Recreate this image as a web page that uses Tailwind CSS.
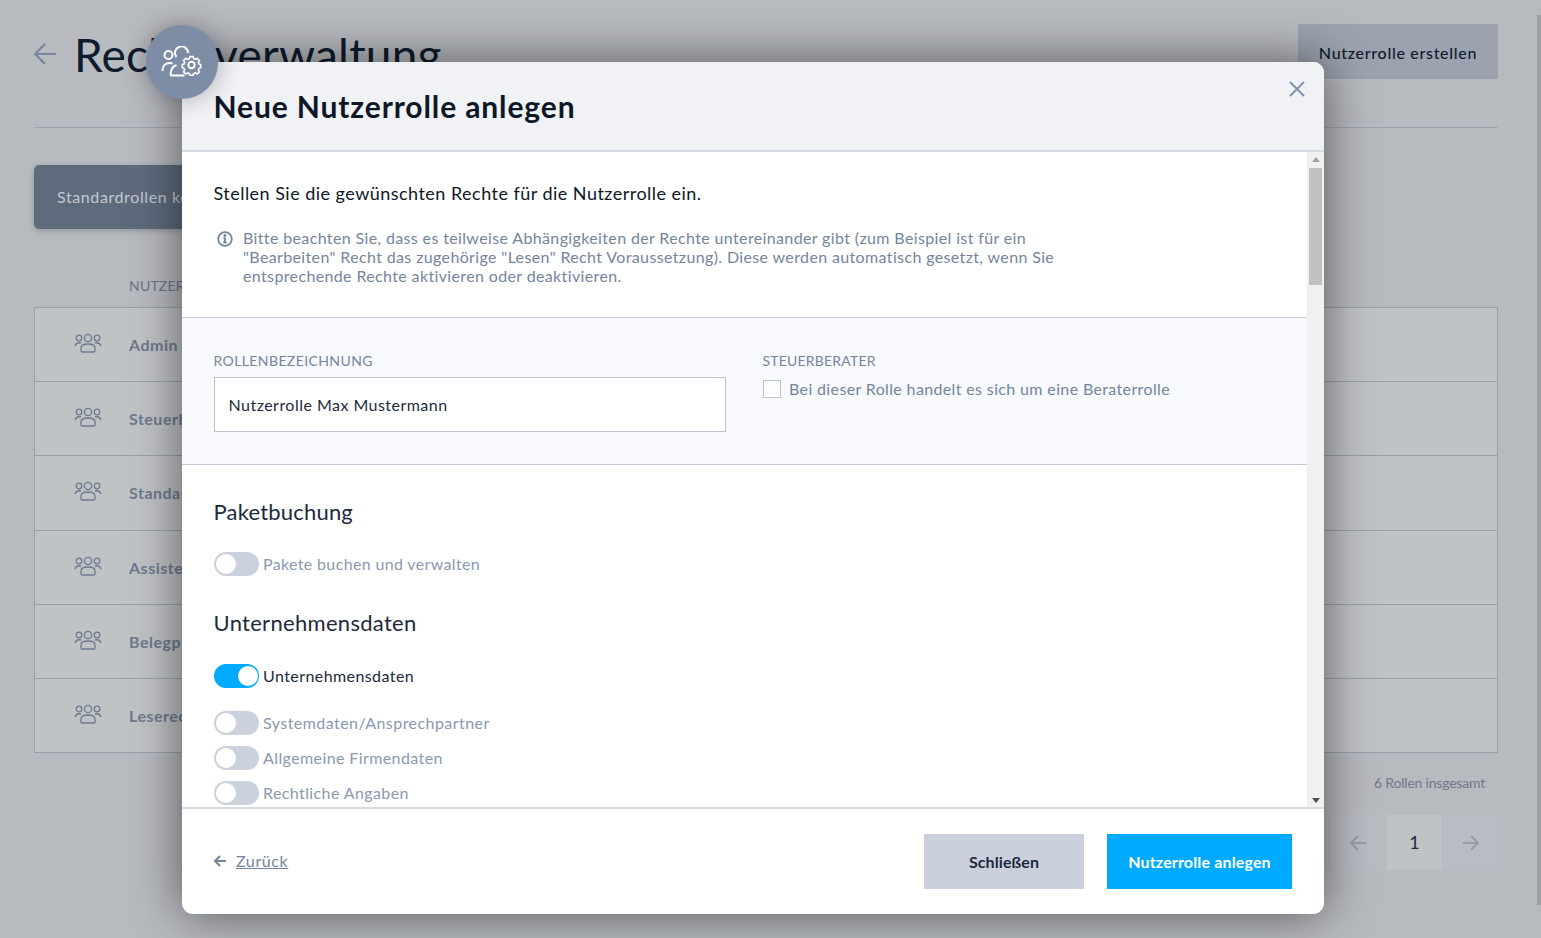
<!doctype html>
<html lang="de"><head><meta charset="utf-8"><script src="https://cdn.jsdelivr.net/npm/@tailwindcss/browser@4"></script></head>
<body class="bg-[#b7babf]">
<div class="relative h-[938px] w-[1541px] overflow-hidden bg-[#b7babf] font-['Lato','Liberation_Sans',sans-serif] text-[#0e1726]">
  <!-- Page behind the overlay -->
  <div class="pl-[34px] pr-[43px] pt-[24px]">
    <header class="flex h-[104px] items-start justify-between border-b border-[#9fa5b0]">
      <div class="flex h-[55px] items-center">
        <svg class="ml-[-1px] mr-[18px] mt-[4px]" width="24" height="24" viewBox="0 0 24 24" fill="none" stroke="#75859c" stroke-width="2"><path d="M23 12H2M12 2 2 12l10 10"/></svg>
        <h1 class="ml-[-1px] mt-[7px] text-[46px] leading-[58px] tracking-[0.2px] font-normal text-[#0e1b2e]">Rechteverwaltung</h1>
      </div>
      <button class="h-[55px] w-[200px] pt-[2px] bg-[#9ca3ae] text-[16px] font-medium tracking-[0.7px] text-[#0e1b2e]">Nutzerrolle erstellen</button>
    </header>
    <button class="mt-[37px] block h-[64px] w-[300px] rounded-[5px] bg-[#5e6b7d] pl-[23px] text-left text-[16px] tracking-[0.6px] text-[#c4c8ce] shadow-[0_2px_6px_rgba(0,0,0,0.2)]">Standardrollen konfigurieren</button>
    <div class="mt-[48px] h-[30px] pl-[95px] text-[14px] leading-[18px] tracking-[0.2px] text-[#6b7587]">NUTZERROLLE</div>
    <div class="border border-[#9aa1ac] bg-[#c0c3c6]">
      <div class="flex h-[74px] items-center border-b border-[#9aa1ac] pl-[39px]"><svg class="mr-[27px] mt-[-4px]" width="28" height="20" viewBox="0 0 28 20" fill="none" stroke="#6d7a8d" stroke-width="1.3"><circle cx="14" cy="5" r="3.6"/><circle cx="5" cy="5" r="2.8"/><circle cx="23" cy="5" r="2.8"/><path d="M1 13c1-3 4-3.500 6-3M27 13c-1-3-4-3.500-6-3M7 18v-3c0-3 3-4 7-4s7 1 7 4v3c0 1-1 1-1 1H8s-1 0-1-1z"/></svg><span class="text-[16px] font-bold tracking-[0.5px] text-[#6d7a8d]">Admin</span></div>
      <div class="flex h-[74px] items-center border-b border-[#9aa1ac] pl-[39px]"><svg class="mr-[27px] mt-[-4px]" width="28" height="20" viewBox="0 0 28 20" fill="none" stroke="#6d7a8d" stroke-width="1.3"><circle cx="14" cy="5" r="3.6"/><circle cx="5" cy="5" r="2.8"/><circle cx="23" cy="5" r="2.8"/><path d="M1 13c1-3 4-3.500 6-3M27 13c-1-3-4-3.500-6-3M7 18v-3c0-3 3-4 7-4s7 1 7 4v3c0 1-1 1-1 1H8s-1 0-1-1z"/></svg><span class="text-[16px] font-bold tracking-[0.5px] text-[#6d7a8d]">Steuerberater</span></div>
      <div class="flex h-[75px] items-center border-b border-[#9aa1ac] pl-[39px]"><svg class="mr-[27px] mt-[-4px]" width="28" height="20" viewBox="0 0 28 20" fill="none" stroke="#6d7a8d" stroke-width="1.3"><circle cx="14" cy="5" r="3.6"/><circle cx="5" cy="5" r="2.8"/><circle cx="23" cy="5" r="2.8"/><path d="M1 13c1-3 4-3.500 6-3M27 13c-1-3-4-3.500-6-3M7 18v-3c0-3 3-4 7-4s7 1 7 4v3c0 1-1 1-1 1H8s-1 0-1-1z"/></svg><span class="text-[16px] font-bold tracking-[0.5px] text-[#6d7a8d]">Standard</span></div>
      <div class="flex h-[74px] items-center border-b border-[#9aa1ac] pl-[39px]"><svg class="mr-[27px] mt-[-4px]" width="28" height="20" viewBox="0 0 28 20" fill="none" stroke="#6d7a8d" stroke-width="1.3"><circle cx="14" cy="5" r="3.6"/><circle cx="5" cy="5" r="2.8"/><circle cx="23" cy="5" r="2.8"/><path d="M1 13c1-3 4-3.500 6-3M27 13c-1-3-4-3.500-6-3M7 18v-3c0-3 3-4 7-4s7 1 7 4v3c0 1-1 1-1 1H8s-1 0-1-1z"/></svg><span class="text-[16px] font-bold tracking-[0.5px] text-[#6d7a8d]">Assistenz</span></div>
      <div class="flex h-[74px] items-center border-b border-[#9aa1ac] pl-[39px]"><svg class="mr-[27px] mt-[-4px]" width="28" height="20" viewBox="0 0 28 20" fill="none" stroke="#6d7a8d" stroke-width="1.3"><circle cx="14" cy="5" r="3.6"/><circle cx="5" cy="5" r="2.8"/><circle cx="23" cy="5" r="2.8"/><path d="M1 13c1-3 4-3.500 6-3M27 13c-1-3-4-3.500-6-3M7 18v-3c0-3 3-4 7-4s7 1 7 4v3c0 1-1 1-1 1H8s-1 0-1-1z"/></svg><span class="text-[16px] font-bold tracking-[0.5px] text-[#6d7a8d]">Belegprüfer</span></div>
      <div class="flex h-[73px] items-center pl-[39px]"><svg class="mr-[27px] mt-[-4px]" width="28" height="20" viewBox="0 0 28 20" fill="none" stroke="#6d7a8d" stroke-width="1.3"><circle cx="14" cy="5" r="3.6"/><circle cx="5" cy="5" r="2.8"/><circle cx="23" cy="5" r="2.8"/><path d="M1 13c1-3 4-3.500 6-3M27 13c-1-3-4-3.500-6-3M7 18v-3c0-3 3-4 7-4s7 1 7 4v3c0 1-1 1-1 1H8s-1 0-1-1z"/></svg><span class="text-[16px] font-bold tracking-[0.5px] text-[#6d7a8d]">Leserecht</span></div>
    </div>
    <div class="mt-[21px] pr-[13px] text-right text-[14px] leading-[17px] tracking-[-0.2px] text-[#6f7889]">6 Rollen insgesamt</div>
    <div class="mt-[24px] flex justify-end gap-[2px]">
      <div class="flex h-[55px] w-[55px] items-center justify-center bg-[#b9bcc3]"><svg width="18" height="18" viewBox="0 0 18 18" fill="none" stroke="#979ea9" stroke-width="2"><path d="M17 9H2M9 2 2 9l7 7"/></svg></div>
      <div class="flex h-[55px] w-[55px] items-center justify-center bg-[#c0c3c6] text-[18px] text-[#1d2a3c]">1</div>
      <div class="flex h-[55px] w-[54px] items-center justify-center bg-[#b9bcc3]"><svg width="18" height="18" viewBox="0 0 18 18" fill="none" stroke="#979ea9" stroke-width="2"><path d="M1 9h15M9 2l7 7-7 7"/></svg></div>
    </div>
  </div>
  <div class="absolute right-0 top-[15px] h-[890px] w-[4px] bg-[#9b9ea3]"></div>

  <!-- Modal -->
  <section class="absolute left-[182px] top-[62px] flex h-[852px] w-[1142px] flex-col rounded-[11px] bg-white shadow-[0_0_50px_rgba(0,0,0,0.55)]">
    <header class="relative h-[90px] shrink-0 rounded-t-[11px] border-b-2 border-[#d5dae4] bg-[#f0f2f6] pl-[31.500px] pt-[25px]">
      <h2 class="text-[30px] leading-[38px] font-bold tracking-[0.88px] text-[#0e1726]">Neue Nutzerrolle anlegen</h2>
      <svg class="absolute right-[18px] top-[18px]" width="18" height="18" viewBox="0 0 18 18" fill="none" stroke="#8494ab" stroke-width="2"><path d="M2 2l14 14M16 2 2 16"/></svg>
    </header>
    <div class="relative flex min-h-0 flex-1">
      <div class="min-w-0 flex-1 overflow-hidden">
        <div class="h-[166px] border-b border-[#c3cad6] pl-[31.500px] pt-[29px]">
          <p class="text-[18px] leading-[24px] tracking-[0.47px] text-[#0e1726]">Stellen Sie die gewünschten Rechte für die Nutzerrolle ein.</p>
          <div class="mt-[23px] flex">
            <svg class="ml-[3px] mr-[10.500px] mt-[3px] shrink-0" width="16" height="16" viewBox="0 0 16 16" fill="none" stroke="#75859c" stroke-width="1.800"><circle cx="8" cy="8" r="6.800"/><path d="M8 7v4.500M6.300 11.500h3.400M6.500 7H8" /><circle cx="8" cy="4.500" r="0.7" fill="#75859c"/></svg>
            <p class="w-[835px] text-[16px] leading-[19px] tracking-[0.365px] text-[#75859c]">Bitte beachten Sie, dass es teilweise Abhängigkeiten der Rechte untereinander gibt (zum Beispiel ist für ein "Bearbeiten" Recht das zugehörige "Lesen" Recht Voraussetzung). Diese werden automatisch gesetzt, wenn Sie entsprechende Rechte aktivieren oder deaktivieren.</p>
          </div>
        </div>
        <div class="flex h-[147px] border-b border-[#c3cad6] bg-[#f7f9fd] pl-[32px] pt-[34px]">
          <div class="w-[512px]">
            <label class="ml-[-0.5px] block text-[14px] leading-[18px] tracking-[0.4px] text-[#75859c]">ROLLENBEZEICHNUNG</label>
            <div class="mt-[7px] flex h-[55px] items-center border border-[#bcc4d1] bg-white pl-[13.500px] text-[16px] tracking-[0.47px] text-[#1d2a3c]">Nutzerrolle Max Mustermann</div>
          </div>
          <div class="ml-[37px]">
            <label class="ml-[-0.5px] block text-[14px] leading-[18px] tracking-[0.2px] text-[#75859c]">STEUERBERATER</label>
            <div class="mt-[9px] flex items-center">
              <span class="mr-[8px] block h-[18px] w-[18px] border border-[#bcc4d1] bg-white"></span>
              <span class="text-[16px] leading-[20px] tracking-[0.36px] text-[#75859c]">Bei dieser Rolle handelt es sich um eine Beraterrolle</span>
            </div>
          </div>
        </div>
        <div class="pl-[32px] pt-[33px]">
          <h3 class="ml-[-0.5px] text-[22px] leading-[28px] tracking-[0.2px] text-[#1d2a3c]">Paketbuchung</h3>
          <div class="mt-[26px] flex items-center">
            <span class="mr-[4px] flex h-[24px] w-[45px] items-center rounded-full bg-[#cbd2de] pl-[1.500px]"><span class="block h-[20px] w-[20px] rounded-full bg-white"></span></span>
            <span class="text-[16px] tracking-[0.35px] text-[#8a99af]">Pakete buchen und verwalten</span>
          </div>
          <h3 class="mt-[33px] ml-[-0.5px] text-[22px] leading-[28px] tracking-[0.3px] text-[#1d2a3c]">Unternehmensdaten</h3>
          <div class="mt-[27px] flex items-center">
            <span class="mr-[4px] flex h-[24px] w-[45px] items-center justify-end rounded-full bg-[#00aaff] pr-[1px]"><span class="block h-[20px] w-[20px] rounded-full bg-white"></span></span>
            <span class="text-[16px] tracking-[0.42px] text-[#1d2a3c]">Unternehmensdaten</span>
          </div>
          <div class="mt-[23px] flex items-center">
            <span class="mr-[4px] flex h-[24px] w-[45px] items-center rounded-full bg-[#cbd2de] pl-[1.500px]"><span class="block h-[20px] w-[20px] rounded-full bg-white"></span></span>
            <span class="text-[16px] tracking-[0.45px] text-[#8a99af]">Systemdaten/Ansprechpartner</span>
          </div>
          <div class="mt-[11px] flex items-center">
            <span class="mr-[4px] flex h-[24px] w-[45px] items-center rounded-full bg-[#cbd2de] pl-[1.500px]"><span class="block h-[20px] w-[20px] rounded-full bg-white"></span></span>
            <span class="text-[16px] tracking-[0.4px] text-[#8a99af]">Allgemeine Firmendaten</span>
          </div>
          <div class="mt-[11px] flex items-center">
            <span class="mr-[4px] flex h-[24px] w-[45px] items-center rounded-full bg-[#cbd2de] pl-[1.500px]"><span class="block h-[20px] w-[20px] rounded-full bg-white"></span></span>
            <span class="text-[16px] tracking-[0.4px] text-[#8a99af]">Rechtliche Angaben</span>
          </div>
        </div>
      </div>
      <div class="flex w-[17px] shrink-0 flex-col items-center bg-[#f1f1f1]">
        <svg class="mt-[5px]" width="8" height="5" viewBox="0 0 8 5" fill="#a3a3a3"><path d="M4 0 8 5H0z"/></svg>
        <div class="mt-[6px] h-[117px] w-[13px] bg-[#c1c1c1]"></div>
        <svg class="mt-auto mb-[4px]" width="8" height="5" viewBox="0 0 8 5" fill="#505050"><path d="M0 0h8L4 5z"/></svg>
      </div>
    </div>
    <footer class="flex h-[107px] shrink-0 items-center border-t-2 border-[#d5dae4] pl-[31px] pr-[32px]">
      <svg class="mr-[10px] mt-[-2px]" width="13" height="12" viewBox="0 0 13 12" fill="none" stroke="#75859c" stroke-width="2"><path d="M13 6H2M7 1 2 6l5 5"/></svg>
      <a class="mt-[-2px] text-[16px] tracking-[0.6px] text-[#75859c] underline">Zurück</a>
      <button class="ml-auto h-[55px] w-[160px] bg-[#c9d0dc] text-[16px] font-bold tracking-[0.1px] text-[#1d2a3c]">Schließen</button>
      <button class="ml-[23px] h-[55px] w-[185px] bg-[#00aaff] text-[16px] font-bold tracking-[0.15px] text-white">Nutzerrolle anlegen</button>
    </footer>
  </section>

  <!-- Round role badge -->
  <div class="absolute left-[146px] top-[25px] flex h-[74px] w-[72px] items-center justify-center rounded-full bg-[#7d8da5] shadow-[0_0_24px_rgba(0,0,0,0.3)]">
    <svg width="42" height="32" viewBox="0 0 42 32" fill="none" stroke="#fff" stroke-width="2">
      <circle cx="7.500" cy="9" r="4"/>
      <path d="M1.500 25c0-5 3-8 7-8 1 0 2 .2 3 .6"/>
      <path d="M15.500 11a6.500 6.500 0 1 1 11.500-4"/>
      <path d="M9.500 29.500c0-5 1.500-9 6-10.500M9.500 29.500h14"/>
      <path fill="#7d8da5" d="M28.500 8.500h4l.7 2.600 2.100.9 2.300-1.400 2.800 2.800-1.400 2.300.9 2.100 2.100.6v4l-2.100.7-.9 2.100 1.400 2.300-2.800 2.800-2.300-1.400-2.100.9-.7 2.100h-4l-.7-2.100-2.100-.9-2.300 1.400-2.800-2.800 1.400-2.300-.9-2.100-2.100-.7v-4l2.100-.6.9-2.100-1.400-2.300 2.800-2.800 2.300 1.400 2.100-.9z" transform="translate(6.100 3.800) scale(.8)"/>
      <circle cx="30.500" cy="19" r="3.200"/>
    </svg>
  </div>
</div>
</body></html>
